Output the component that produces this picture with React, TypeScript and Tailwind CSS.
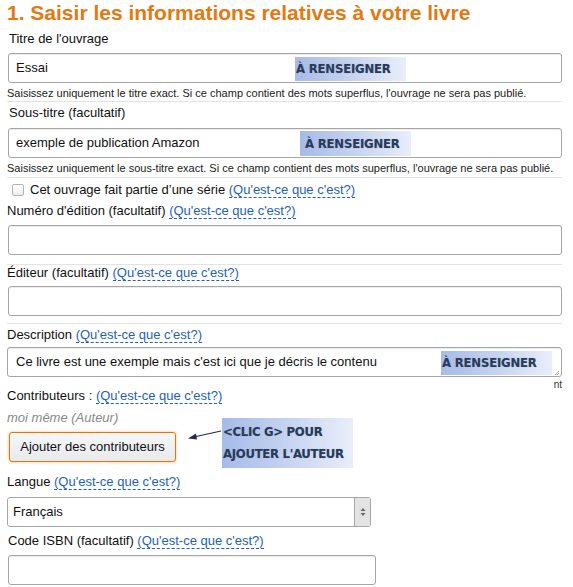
import React from "react";

const link = "text-[#1e61b8] border-b border-dashed border-[#1e61b8] leading-[14px]";

function Help() {
  return <span className={link}>(Qu'est-ce que c'est?)</span>;
}

function Badge({ children, className = "" }: { children: React.ReactNode; className?: string }) {
  return (
    <div
      className={`absolute flex items-center bg-gradient-to-r from-[#a7bbe8] via-[#c6d3f0] to-[#e9eef9] text-[#2b3a58] font-bold font-['DejaVu_Sans_Condensed','Liberation_Sans',sans-serif] tracking-[-0.2px] [text-shadow:0_0_1px_#8ea2c9] ${className}`}
    >
      {children}
    </div>
  );
}

function TextBox({ value, badge, className = "" }: { value?: string; badge?: React.ReactNode; className?: string }) {
  return (
    <div
      className={`relative h-[30px] border border-[#a6a6a6] rounded-[3px] shadow-[inset_0_1px_0_rgba(0,0,0,0.07)] flex items-center px-[7px] text-[13px] text-[#111] ${className}`}
    >
      {value}
      {badge}
    </div>
  );
}

function Hint({ children }: { children: React.ReactNode }) {
  return <div className="text-[11px] leading-[14px] text-[#222] mt-[3px]">{children}</div>;
}

function Sep({ className = "" }: { className?: string }) {
  return <div className={`border-t border-[#e3e3e3] ${className}`} />;
}

export default function App() {
  return (
    <div className="w-[573px] h-[587px] overflow-hidden bg-white font-['Liberation_Sans',Arial,sans-serif] text-[13px] text-[#111]">
      <div className="pl-[7px] pr-[11px]">
        <h1 className="pt-[1px] text-[21px] leading-[24px] font-bold text-[#e47911]">
          1. Saisir les informations relatives à votre livre
        </h1>
        <div className="mt-[6px] leading-[16px] pl-[2px]">Titre de l'ouvrage</div>
        <TextBox
          className="mt-[6px] ml-[1px]"
          value="Essai"
          badge={<Badge className="left-[286px] top-[3px] w-[111px] h-[24px] text-[13px] pl-[1px]">À RENSEIGNER</Badge>}
        />
        <Hint>Saisissez uniquement le titre exact. Si ce champ contient des mots superflus, l'ouvrage ne sera pas publié.</Hint>
        <Sep className="mt-[1px]" />
        <div className="mt-[3px] leading-[16px] pl-[2px]">Sous-titre (facultatif)</div>
        <TextBox
          className="mt-[7px] ml-[1px]"
          value="exemple de publication Amazon"
          badge={<Badge className="left-[291px] top-[2px] w-[111px] h-[25px] text-[13px] pl-[5px]">À RENSEIGNER</Badge>}
        />
        <Hint>Saisissez uniquement le sous-titre exact. Si ce champ contient des mots superflus, l'ouvrage ne sera pas publié.</Hint>
        <Sep className="mt-[2px]" />
        <div className="mt-[4px] h-[16px] flex items-center pl-[5px] gap-[6px]">
          <span className="w-[12px] h-[12px] border border-[#b5b5b5] rounded-[2px] bg-gradient-to-b from-white to-[#ececec]" />
          <span className="leading-[16px]">
            Cet ouvrage fait partie d’une série <Help />
          </span>
        </div>
        <div className="mt-[5px] leading-[16px]">
          Numéro d'édition (facultatif) <Help />
        </div>
        <TextBox className="mt-[6px] ml-[1px]" />
        <Sep className="mt-[9px]" />
        <div className="leading-[16px]">
          Éditeur (facultatif) <Help />
        </div>
        <TextBox className="mt-[5px] ml-[1px]" />
        <Sep className="mt-[7px]" />
        <div className="mt-[3px] leading-[16px]">
          Description <Help />
        </div>
        <div className="relative mt-[4px]">
          <TextBox
            className="pl-[8px] rounded-[2px]"
            value="Ce livre est une exemple mais c'est ici que je décris le contenu"
            badge={<Badge className="left-[433px] top-[3px] w-[111px] h-[24px] text-[13px] pl-[1px]">À RENSEIGNER</Badge>}
          />
          <svg className="absolute right-[2px] top-[24px]" width="5" height="5" viewBox="0 0 5 5">
            <path d="M4 0 L0 4 M4 2 L2 4" stroke="#888" strokeWidth="0.8" />
          </svg>
          <span className="absolute right-0 top-[33px] text-[10px] leading-[10px] text-[#333]">nt</span>
        </div>
        <div className="mt-[11px] leading-[16px]">
          Contributeurs : <Help />
        </div>
        <div className="flex h-[58px] mt-[6px]">
          <div className="flex flex-col">
            <div className="leading-[16px] italic text-[#888]">moi même (Auteur)</div>
            <button className="mt-[6px] ml-[2px] w-[167px] h-[30px] rounded-[3px] border border-[#e77600] bg-gradient-to-b from-[#f7f8fa] to-[#e7e9ec] shadow-[0_0_3px_rgba(228,121,17,0.5)] text-[13px] text-[#111]">
              Ajouter des contributeurs
            </button>
          </div>
          <svg className="ml-[11px] mt-[18px]" width="35" height="14" viewBox="0 0 35 14">
            <path d="M34 3 L7 9" stroke="#1c2b4f" strokeWidth="1.2" />
            <path d="M1 10.5 L9 5.5 L10 11.5 Z" fill="#1c2b4f" />
          </svg>
          <div className="w-[131px] h-[50px] mt-[8px] flex flex-col justify-center pl-[1px] bg-gradient-to-r from-[#a7bbe8] via-[#c6d3f0] to-[#e9eef9] text-[#2b3a58] font-bold font-['DejaVu_Sans_Condensed','Liberation_Sans',sans-serif] text-[13px] leading-[22px] tracking-[-0.3px] [text-shadow:0_0_1px_#8ea2c9]">
            <div>&lt;CLIC G&gt; POUR</div>
            <div>AJOUTER L'AUTEUR</div>
          </div>
        </div>
        <div className="mt-[6px] leading-[16px]">
          Langue <Help />
        </div>
        <div className="mt-[7px] w-[364px] h-[30px] flex border border-[#a6a6a6] rounded-[3px] overflow-hidden">
          <div className="flex-1 flex items-center px-[5px] text-[13px]">Français</div>
          <div className="w-[16px] bg-[#e3e3e3] border-l border-[#a6a6a6] flex items-center justify-center">
            <svg width="6" height="10" viewBox="0 0 6 10">
              <path d="M3 1 L5.5 4 L0.5 4 Z M3 9 L0.5 6 L5.5 6 Z" fill="#666" />
            </svg>
          </div>
        </div>
        <div className="mt-[6px] leading-[16px] pl-[1px]">
          Code ISBN (facultatif) <Help />
        </div>
        <TextBox className="mt-[6px] ml-[1px] w-[368px]" />
      </div>
    </div>
  );
}
